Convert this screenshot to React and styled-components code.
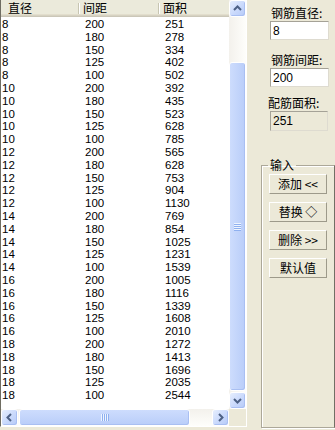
import React from "react";
import styled, { createGlobalStyle } from "styled-components";

const GlobalStyle = createGlobalStyle`
  html, body {
    margin: 0;
    padding: 0;
    background: #ece9d8;
  }
  body {
    font-family: "Liberation Sans", "Noto Sans CJK SC", sans-serif;
    font-size: 12px;
    color: #000;
  }
`;

const cjk = `"Noto Sans CJK SC", "Liberation Sans", sans-serif`;

const Window = styled.div`
  width: 335px;
  height: 430px;
  display: flex;
  background: #ece9d8;
  overflow: hidden;
`;

/* ---------- list view ---------- */

const ListFrame = styled.div`
  width: 246px;
  height: 426px;
  display: grid;
  grid-template-columns: 228px 17px;
  grid-template-rows: 409px 17px;
  border-left: 1px solid #6f6d62;
  border-right: 1px solid #fff;
  border-bottom: 1px solid #fff;
  background: #fff;
`;

const Content = styled.div`
  overflow: hidden;
  display: flex;
  flex-direction: column;
`;

const Header = styled.div`
  display: grid;
  grid-template-columns: 78px 80px 1fr;
  height: 17px;
  flex-shrink: 0;
  background: #ebeadb;
  box-shadow: inset 0 -1px #cbc7b8, inset 0 -2px #d6d2c2, inset 0 -3px #e2decd;
`;

const HeadCell = styled.div`
  position: relative;
  padding-left: ${(p) => p.$pad}px;
  font-family: ${cjk};
  font-size: 12px;
  line-height: 16px;
  color: #000;

  &::after {
    content: "";
    display: ${(p) => (p.$last ? "none" : "block")};
    position: absolute;
    right: 0;
    top: 3px;
    width: 1px;
    height: 11px;
    background: #c7c5b2;
    box-shadow: 1px 0 #fff;
  }
`;

const Rows = styled.div`
  padding-top: 1px;
`;

const Row = styled.div`
  display: grid;
  grid-template-columns: 78px 80px 1fr;
  height: 12.8px;
  line-height: 12.8px;
  font-size: 11.5px;
`;

const Cell = styled.div`
  padding-left: ${(p) => p.$pad}px;
  white-space: nowrap;
`;

/* ---------- scroll bars ---------- */

const VScroll = styled.div`
  display: flex;
  flex-direction: column;
  background: linear-gradient(90deg, #f3f1ec, #fefefb);
`;

const HScroll = styled.div`
  display: flex;
  background: linear-gradient(180deg, #f3f1ec, #fefefb);
`;

const ArrowButton = styled.div`
  width: 17px;
  height: 17px;
  flex-shrink: 0;
  box-sizing: border-box;
  border: 1px solid #fff;
  border-radius: 3px;
  background: linear-gradient(135deg, #e6eefd 0%, #c9d9fc 55%, #b6caf7 100%);
  box-shadow: inset -1px -1px 0 #a9bff2;
  display: flex;
  align-items: center;
  justify-content: center;
`;

const VTrack = styled.div`
  flex: 1;
  display: flex;
  flex-direction: column;
  padding-top: ${(p) => p.$offset}px;
  padding-bottom: 1px;
`;

const HTrack = styled.div`
  flex: 1;
  display: flex;
  padding-left: 1px;
`;

const Thumb = styled.div`
  box-sizing: border-box;
  border: 1px solid #fff;
  border-radius: 3px;
  background: ${(p) =>
    p.$horizontal
      ? "linear-gradient(180deg, #cddcfd, #b9cdf9)"
      : "linear-gradient(90deg, #cddcfd, #b9cdf9)"};
  box-shadow: inset -1px -1px 0 #a9bff2;
  display: flex;
  align-items: center;
  justify-content: center;
  ${(p) => (p.$horizontal ? `width: ${p.$size}px;` : "flex: 1;")}
`;

const Grip = styled.div`
  width: ${(p) => (p.$horizontal ? 8 : 7)}px;
  height: ${(p) => (p.$horizontal ? 7 : 8)}px;
  background: repeating-linear-gradient(
    ${(p) => (p.$horizontal ? "90deg" : "180deg")},
    #eef4fe 0px,
    #eef4fe 1px,
    #8fb0f0 1px,
    #8fb0f0 2px
  );
`;

const Corner = styled.div`
  background: #ece9d8;
`;

const Arrow = ({ dir }) => {
  const paths = {
    up: "M4 9 L7.5 5.5 L11 9",
    down: "M4 6 L7.5 9.5 L11 6",
    left: "M9 4 L5.5 7.5 L9 11",
    right: "M6 4 L9.5 7.5 L6 11",
  };
  return (
    <svg width="15" height="15" viewBox="0 0 15 15">
      <path d={paths[dir]} fill="none" stroke="#4d6185" strokeWidth="2" />
    </svg>
  );
};

/* ---------- side panel ---------- */

const Side = styled.div`
  flex: 1;
  display: flex;
  flex-direction: column;
  padding: 6px 0 0 14px;
`;

const Fields = styled.div`
  display: flex;
  flex-direction: column;
  padding-left: ${(p) => p.$pad}px;
`;

const Label = styled.div`
  font-family: ${cjk};
  font-size: 12px;
  line-height: 14px;
  margin-top: ${(p) => p.$top}px;
  margin-left: ${(p) => p.$shift || 0}px;
  margin-bottom: 1px;
`;

const TextBox = styled.input`
  box-sizing: border-box;
  width: ${(p) => p.$w}px;
  height: ${(p) => p.$h}px;
  margin: 0;
  padding: 0 0 0 2px;
  border: 1px solid;
  border-color: #a5a297 #dedbd0 #dedbd0 #a5a297;
  background: ${(p) => (p.readOnly && p.$disabled ? "#ece9d8" : "#fff")};
  font-family: "Liberation Sans", sans-serif;
  font-size: 12px;
  color: #000;
  outline: none;
`;

const Group = styled.fieldset`
  margin: 27px 0 0 0;
  padding: 0;
  width: 74px;
  height: 270px;
  box-sizing: border-box;
  min-width: 0;
  border: 1px solid #aca899;
  border-right-color: #716f64;
  box-shadow: inset 1px 1px #fff, 1px 1px #fff;
  display: flex;
  flex-direction: column;
  gap: 8px;
`;

const Legend = styled.legend`
  margin-left: 6px;
  padding: 0 2px;
  font-family: ${cjk};
  font-size: 12px;
  line-height: 14px;
`;

const Button = styled.button`
  box-sizing: border-box;
  width: 58px;
  height: 20px;
  margin: ${(p) => (p.$first ? "2px" : "0")} 0 0 7px;
  padding: 0;
  border: 1px solid;
  border-color: #fff #9d9a8a #9d9a8a #fff;
  background: #ece9d8;
  font-family: ${cjk};
  font-size: 12px;
  line-height: 16px;
  color: #000;
  text-align: center;
  white-space: pre;
`;

const data = [
  [8, [251, 278, 334, 402, 502]],
  [10, [392, 435, 523, 628, 785]],
  [12, [565, 628, 753, 904, 1130]],
  [14, [769, 854, 1025, 1231, 1539]],
  [16, [1005, 1116, 1339, 1608, 2010]],
  [18, [1272, 1413, 1696, 2035, 2544]],
];
const spacings = [200, 180, 150, 125, 100];

const rows = data.flatMap(([d, areas]) =>
  areas.map((a, i) => ({ d, s: spacings[i], a }))
);

export default function App() {
  return (
    <Window>
      <GlobalStyle />
      <ListFrame>
        <Content>
          <Header>
            <HeadCell $pad={7}>直径</HeadCell>
            <HeadCell $pad={4}>间距</HeadCell>
            <HeadCell $pad={4} $last>
              面积
            </HeadCell>
          </Header>
          <Rows>
            {rows.map((r, i) => (
              <Row key={i}>
                <Cell $pad={1}>{r.d}</Cell>
                <Cell $pad={6}>{r.s}</Cell>
                <Cell $pad={6}>{r.a}</Cell>
              </Row>
            ))}
          </Rows>
        </Content>
        <VScroll>
          <ArrowButton>
            <Arrow dir="up" />
          </ArrowButton>
          <VTrack $offset={45}>
            <Thumb>
              <Grip />
            </Thumb>
          </VTrack>
          <ArrowButton>
            <Arrow dir="down" />
          </ArrowButton>
        </VScroll>
        <HScroll>
          <ArrowButton>
            <Arrow dir="left" />
          </ArrowButton>
          <HTrack>
            <Thumb $horizontal $size={171}>
              <Grip $horizontal />
            </Thumb>
          </HTrack>
          <ArrowButton>
            <Arrow dir="right" />
          </ArrowButton>
        </HScroll>
        <Corner />
      </ListFrame>

      <Side>
        <Fields $pad={9}>
          <Label $top={0} $shift={1}>钢筋直径:</Label>
          <TextBox $w={59} $h={19} value="8" readOnly />
          <Label $top={13} $shift={1}>钢筋间距:</Label>
          <TextBox $w={59} $h={19} value="200" readOnly />
          <Label $top={9} $shift={-2}>配筋面积:</Label>
          <TextBox $w={58} $h={20} value="251" readOnly $disabled />
        </Fields>
        <Group>
          <Legend>输入</Legend>
          <Button $first>添加 &lt;&lt;</Button>
          <Button>替换 ◇</Button>
          <Button>删除 &gt;&gt;</Button>
          <Button>默认值</Button>
        </Group>
      </Side>
    </Window>
  );
}
